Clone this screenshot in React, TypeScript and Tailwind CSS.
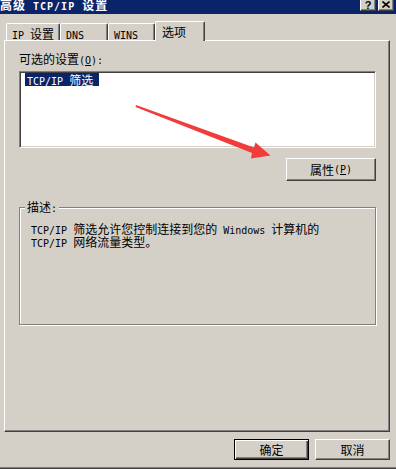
import type { ReactNode } from 'react';

// SimSun-like metrics: latin runs 6px wide (mono 10px), CJK runs 12px
const latin = /^[\x00-\x7f]+$/;

function T({ s }: { s: string }) {
  const parts = s.split(/([\x00-\x7f]+)/).filter(Boolean);
  return (
    <>
      {parts.map((p, i) =>
        latin.test(p) ? (
          <span key={i} className="font-['DejaVu_Sans_Mono',monospace] text-[10px]">
            {p}
          </span>
        ) : (
          <span key={i} className="font-['Noto_Sans_CJK_SC',sans-serif] text-[12px]">
            {p}
          </span>
        ),
      )}
    </>
  );
}

function CapBtn({ children }: { children: ReactNode }) {
  return (
    <div className="flex h-[14px] w-[16px] items-center justify-center border border-t-white border-l-white border-r-[#404040] border-b-[#404040] bg-[#d4d0c8] pt-[1px] text-black shadow-[inset_-1px_-1px_#808080]">
      {children}
    </div>
  );
}

function Tab({ label, width }: { label: string; width: string }) {
  return (
    <div
      className={`${width} h-[17px] whitespace-pre rounded-t-[2px] border-t border-r border-l border-t-white border-r-[#404040] border-l-white bg-[#d4d0c8] pt-[3px] pl-[5px] leading-[12px] shadow-[inset_-1px_0_#808080]`}
    >
      <T s={label} />
    </div>
  );
}

const raised =
  'flex items-center justify-center border border-t-white border-l-white border-r-[#404040] border-b-[#404040] bg-[#d4d0c8] leading-[12px] shadow-[inset_-1px_-1px_#808080]';

export default function App() {
  return (
    <div className="relative h-[469px] w-[396px] overflow-hidden bg-[#d4d0c8] text-black select-none">
      {/* Title bar */}
      <div className="flex h-[14px] overflow-hidden bg-[#0a246a] font-bold text-white">
        <div className="-mt-[2px] whitespace-pre leading-[12px] tracking-[1px]">
          <T s="高级 TCP/IP 设置" />
        </div>
        <div className="-mt-[3px] mr-[2px] ml-auto flex gap-[2px]">
          <CapBtn>
            <span className="font-['Liberation_Sans',sans-serif] text-[11px] leading-[10px] font-bold">?</span>
          </CapBtn>
          <CapBtn>
            <svg width="8" height="7" viewBox="0 0 8 7">
              <path d="M0.5 0.5 L7.5 6.5 M7.5 0.5 L0.5 6.5" stroke="#000" strokeWidth="1.6" />
            </svg>
          </CapBtn>
        </div>
      </div>

      {/* Tabs */}
      <div className="mt-[7px] flex h-[19px] items-end pl-[6px]">
        <Tab label="IP 设置" width="w-[54px]" />
        <Tab label="DNS" width="w-[48px]" />
        <Tab label="WINS" width="w-[47px]" />
        <div className="relative z-10 -mb-px h-[20px] w-[50px] rounded-t-[2px] border-t border-r border-l border-t-white border-r-[#404040] border-l-white bg-[#d4d0c8] pt-[3px] pl-[6px] leading-[12px] shadow-[inset_-1px_0_#808080]">
          <T s="选项" />
        </div>
      </div>

      {/* Tab panel */}
      <div className="ml-[4px] flex h-[392px] w-[386px] flex-col border border-t-white border-l-white border-r-[#404040] border-b-[#404040] pl-[14px] shadow-[inset_-1px_-1px_#808080]">
        <div className="mt-[11px] h-[12px] whitespace-pre leading-[12px]">
          <T s="可选的设置" />
          <span className="font-['DejaVu_Sans_Mono',monospace] text-[10px]">
            (<span className="underline">O</span>):
          </span>
        </div>

        <div className="mt-[7px] h-[77px] w-[357px] border border-t-[#808080] border-l-[#808080] border-r-white border-b-white bg-white pt-[1px] pl-[5px] shadow-[inset_1px_1px_#404040,inset_-1px_-1px_#d4d0c8]">
          <div className="h-[13px] w-[74px] whitespace-pre bg-[#0a246a] pl-[2px] leading-[13px] text-white">
            <T s="TCP/IP 筛选" />
          </div>
        </div>

        <div className="mt-[10px] flex w-[357px] justify-end">
          <div className={`${raised} h-[23px] w-[90px] whitespace-pre`}>
            <T s="属性" />
            <span className="font-['DejaVu_Sans_Mono',monospace] text-[10px]">
              (<span className="underline">P</span>)
            </span>
          </div>
        </div>

        <div className="relative mt-[26px] h-[118px] w-[357px] border border-[#808080] pt-[15px] pl-[11px] leading-[11px] shadow-[inset_1px_1px_white,1px_1px_white]">
          <div className="absolute -top-[8px] left-[5px] bg-[#d4d0c8] px-[2px] leading-[12px] whitespace-pre">
            <T s="描述:" />
          </div>
          <div className="whitespace-pre">
            <T s="TCP/IP 筛选允许您控制连接到您的 Windows 计算机的" />
          </div>
          <div className="whitespace-pre">
            <T s="TCP/IP 网络流量类型。" />
          </div>
        </div>
      </div>

      {/* Dialog buttons */}
      <div className="mt-[7px] flex h-[21px] justify-end gap-[6px] pr-[6px]">
        <div className="flex h-[21px] w-[75px] items-center justify-center border border-black leading-[12px] shadow-[inset_1px_1px_white,inset_-1px_-1px_#404040,inset_-2px_-2px_#808080]">
          <T s="确定" />
        </div>
        <div className={`${raised} h-[21px] w-[75px]`}>
          <T s="取消" />
        </div>
      </div>

      <div className="mt-[7px] h-[2px] border-t border-b border-t-[#808080] border-b-[#404040]" />

      {/* Red annotation arrow */}
      <svg
        className="pointer-events-none absolute top-0 left-0"
        width="396"
        height="469"
        viewBox="0 0 396 469"
      >
        <polygon
          points="136,105 254,147.5 255.5,142.5 270.5,155.5 251,158.5 252,153 135.5,107"
          fill="#f23b3b"
        />
      </svg>
    </div>
  );
}
